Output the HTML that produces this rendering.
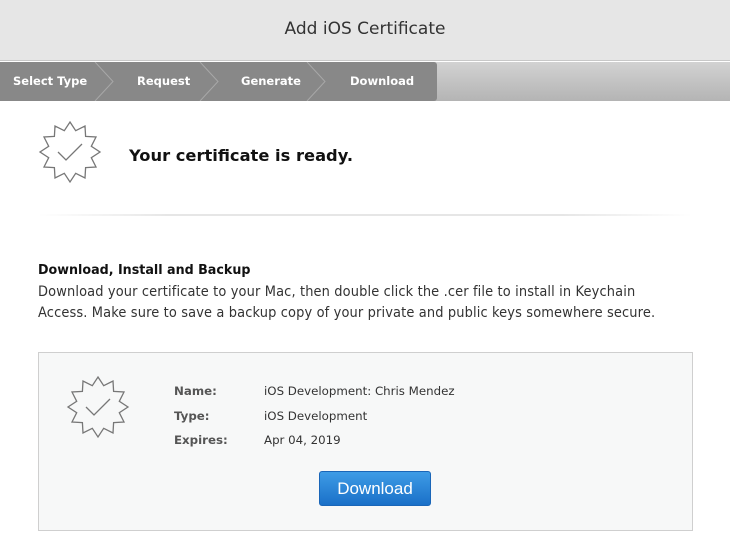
<!DOCTYPE html>
<html><head><meta charset="utf-8"><style>
*{margin:0;padding:0;box-sizing:border-box}
body{width:730px;height:551px;background:#fff;font-family:"DejaVu Sans","Liberation Sans",sans-serif;position:relative;overflow:hidden}
.hdr{position:absolute;left:0;top:0;width:730px;height:61px;background:#e6e6e6;border-bottom:1px solid #c8c8c8;text-align:center;font-size:17px;color:#333;line-height:58px}
.bar{position:absolute;left:0;top:62px;width:730px;height:39px;background:linear-gradient(#d2d2d2,#b4b4b4)}
.steps{position:absolute;left:0;top:0;width:437px;height:39px;background:#888;border-radius:0 3px 3px 0}
.st{position:absolute;top:0;line-height:39px;font-size:11.5px;font-weight:bold;color:#fff}
.sep{position:absolute;top:0}
.ready{position:absolute;left:129px;top:146px;font-size:16.3px;font-weight:bold;color:#111}
.div{position:absolute;left:38px;top:214px;width:654px;height:2px;background:linear-gradient(90deg,rgba(230,230,230,0),#e6e6e6 20%,#e6e6e6 80%,rgba(230,230,230,0))}
.ln{position:absolute;left:38px;white-space:nowrap;font-size:14.6px;letter-spacing:0.15px;line-height:21px;color:#333;transform-origin:0 0}
.card{position:absolute;left:38px;top:352px;width:655px;height:179px;background:#f7f8f8;border:1px solid #cfcfcf}
.lbl{position:absolute;left:174px;font-size:11.8px;font-weight:bold;color:#555}
.val{position:absolute;left:264px;font-size:11.8px;color:#333}
.btn{position:absolute;left:319px;top:471px;width:112px;height:35px;border-radius:3px;background:linear-gradient(#3e9ce6,#1a70c8);border:1px solid #1a66b8;color:#fff;font-family:"Liberation Sans",sans-serif;font-size:17px;text-align:center;line-height:33px}
</style></head><body>
<div class="hdr">Add iOS Certificate</div>
<div class="bar"><div class="steps">
<span class="st" style="left:13px">Select Type</span>
<span class="st" style="left:137px">Request</span>
<span class="st" style="left:241px">Generate</span>
<span class="st" style="left:350px">Download</span>
<svg class="sep" width="437" height="39"><g fill="none" stroke="#a8a8a8" stroke-width="1">
<path d="M95 0 L113 19.5 L95 39"/><path d="M200 0 L218 19.5 L200 39"/><path d="M307 0 L325 19.5 L307 39"/></g></svg>
</div></div>
<svg style="position:absolute;left:38px;top:120px" width="64" height="64" viewBox="-32 -32 64 64"><polygon fill="none" stroke="#777" stroke-width="1.3" points="0,-30 5.7,-21.3 15,-26 15.6,-15.6 26,-15 21.3,-5.7 30,0 21.3,5.7 26,15 15.6,15.6 15,26 5.7,21.3 0,30 -5.7,21.3 -15,26 -15.6,15.6 -26,15 -21.3,5.7 -30,0 -21.3,-5.7 -26,-15 -15.6,-15.6 -15,-26 -5.7,-21.3"/><path d="M-12,0 L-4,8 L12,-8" fill="none" stroke="#777" stroke-width="1.3"/></svg>
<div class="ready">Your certificate is ready.</div>
<div class="div"></div>
<div class="ln" style="top:260px;font-size:13.5px;letter-spacing:0;font-weight:bold;color:#111;transform:scaleX(0.94)">Download, Install and Backup</div>
<div class="ln" style="top:281px;transform:scaleX(0.89)">Download your certificate to your Mac, then double click the .cer file to install in Keychain</div>
<div class="ln" style="top:302px;transform:scaleX(0.89)">Access. Make sure to save a backup copy of your private and public keys somewhere secure.</div>
<div class="card"></div>
<svg style="position:absolute;left:66px;top:375px" width="64" height="64" viewBox="-32 -32 64 64"><polygon fill="none" stroke="#777" stroke-width="1.3" points="0,-30 5.7,-21.3 15,-26 15.6,-15.6 26,-15 21.3,-5.7 30,0 21.3,5.7 26,15 15.6,15.6 15,26 5.7,21.3 0,30 -5.7,21.3 -15,26 -15.6,15.6 -26,15 -21.3,5.7 -30,0 -21.3,-5.7 -26,-15 -15.6,-15.6 -15,-26 -5.7,-21.3"/><path d="M-12,0 L-4,8 L12,-8" fill="none" stroke="#777" stroke-width="1.3"/></svg>
<div class="lbl" style="top:384px">Name:</div><div class="val" style="top:384px">iOS Development: Chris Mendez</div>
<div class="lbl" style="top:409px">Type:</div><div class="val" style="top:409px">iOS Development</div>
<div class="lbl" style="top:433px">Expires:</div><div class="val" style="top:433px">Apr 04, 2019</div>
<div class="btn">Download</div>
</body></html>
